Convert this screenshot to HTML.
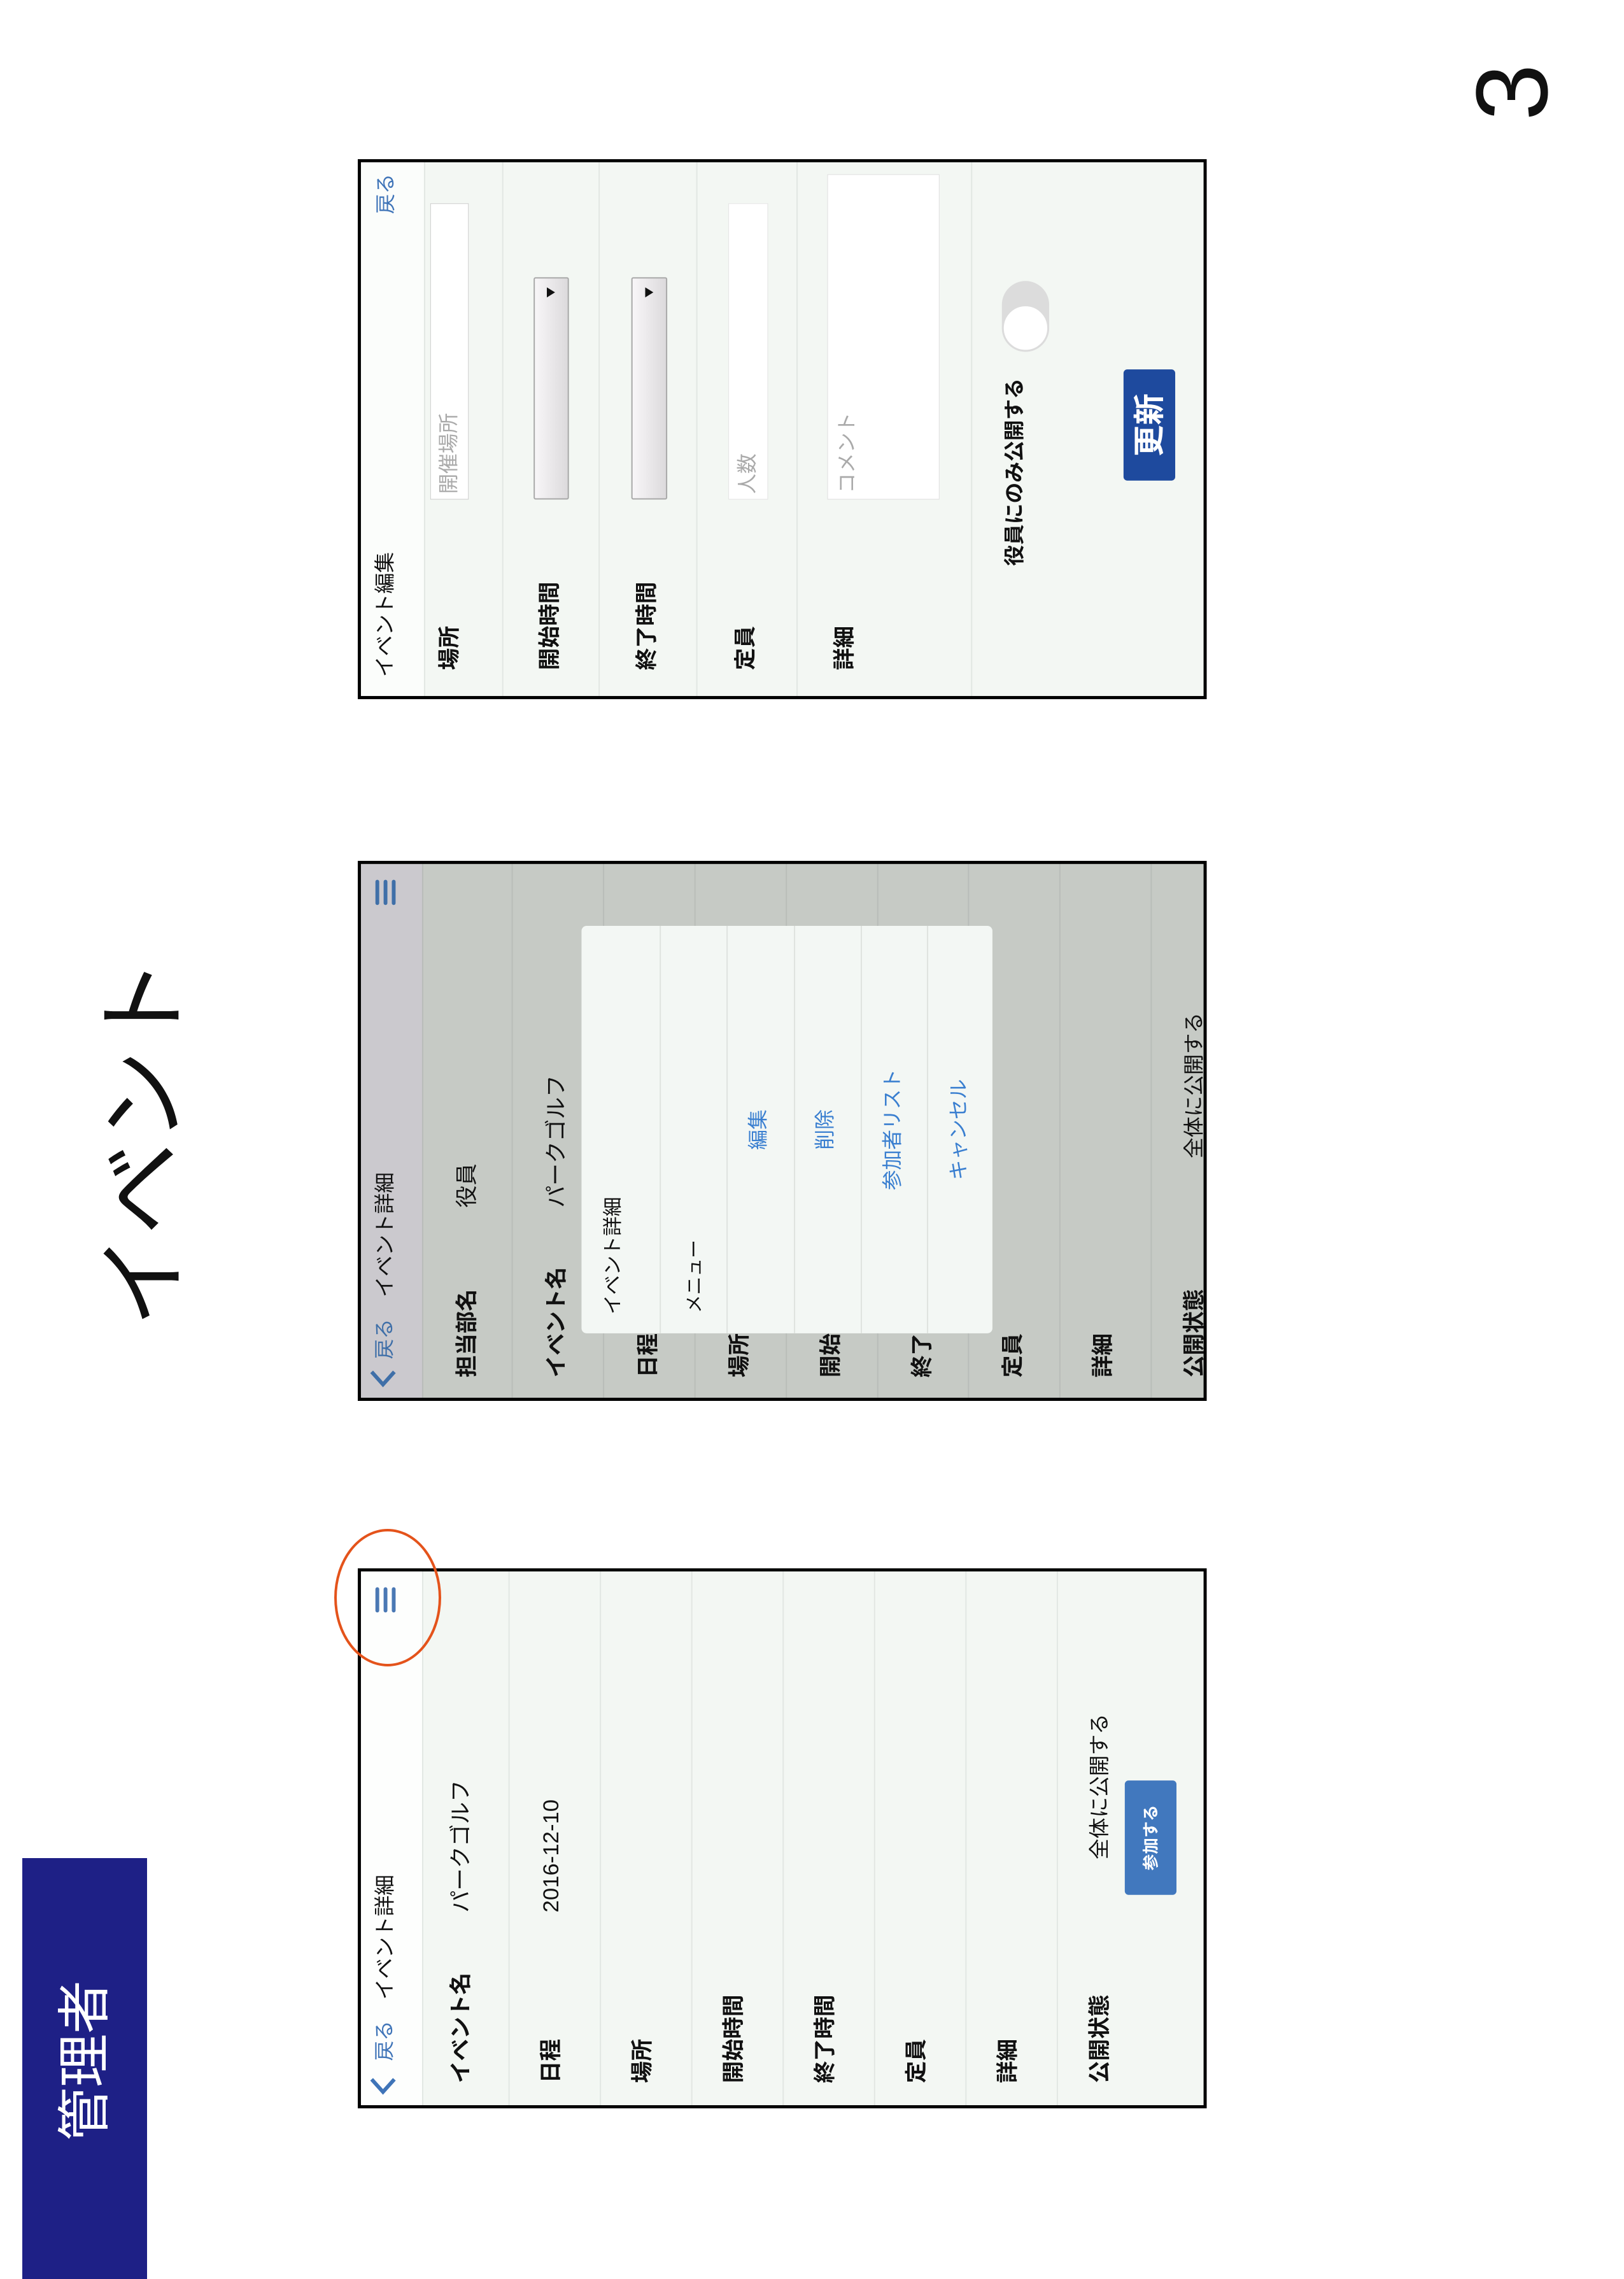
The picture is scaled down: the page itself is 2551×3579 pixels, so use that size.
<!DOCTYPE html>
<html><head><meta charset="utf-8">
<style>
*{margin:0;padding:0;box-sizing:border-box}
body{width:2551px;height:3579px;background:#fff;position:relative;overflow:hidden;font-family:"Liberation Sans","Noto Sans CJK JP",sans-serif;color:#111}
.abs{position:absolute}
.rot{position:absolute;transform:rotate(-90deg);text-align:center;white-space:nowrap}
.ph{position:absolute;left:562px;width:855px;height:1347px;transform-origin:0 0;transform:translate(0,848px) rotate(-90deg) scale(0.992,0.99);overflow:hidden;background:#f3f7f3}
.ph .frame{position:absolute;left:0;top:0;width:855px;height:1347px;border:5px solid #000;z-index:10}
.t{position:absolute;white-space:nowrap;line-height:1}
.lb{font-weight:bold;font-size:35px}
.v{font-size:35px}
.sep{position:absolute;left:0;width:855px;height:2px;background:#e2e7e3}
.blue{color:#3f74b8}
.ham{position:absolute;left:785px;width:40px;height:6px;border-radius:3px;background:#4a78b4}
</style></head><body>

<div class="rot" style="left:2295px;top:65px;width:160px;height:160px;font-size:160px;line-height:160px">3</div>
<div class="rot" style="left:-74px;top:1719px;width:600px;height:150px;font-size:145px;line-height:150px">イベント</div>
<div class="abs" style="left:35px;top:2918px;width:196px;height:661px;background:#1e2086"></div>
<div class="rot" style="left:-17px;top:3191px;width:300px;height:90px;font-size:84px;line-height:90px;color:#fff">管理者</div>
<div class="abs" style="left:525px;top:2401px;width:168px;height:216px;border:4px solid #e4531b;border-radius:50%;z-index:20"></div>

<!-- ===== Screen 1 ===== -->
<div class="ph" style="top:2463px">
  <div class="abs" style="left:0;top:0;width:855px;height:102px;background:#fdfefd"></div>
  <svg class="abs" style="left:16px;top:16px" width="40" height="50"><polyline points="30,6 10,24 30,42" fill="none" stroke="#3f74b8" stroke-width="6"/></svg>
  <div class="t blue" style="left:75px;top:26px;font-size:32px">戻る</div>
  <div class="t" style="left:172px;top:26px;font-size:33px">イベント詳細</div>
  <div class="ham" style="top:28px"></div><div class="ham" style="top:41px"></div><div class="ham" style="top:54px"></div>
  <div class="sep" style="top:102px"></div><div class="sep" style="top:239px"></div><div class="sep" style="top:384px"></div><div class="sep" style="top:529px"></div><div class="sep" style="top:674px"></div><div class="sep" style="top:819px"></div><div class="sep" style="top:964px"></div><div class="sep" style="top:1109px"></div>
  <div class="t lb" style="left:40px;top:146px">イベント名</div><div class="t v" style="left:310px;top:146px">パークゴルフ</div>
  <div class="t lb" style="left:40px;top:289px">日程</div><div class="t v" style="left:310px;top:289px">2016-12-10</div>
  <div class="t lb" style="left:40px;top:434px">場所</div>
  <div class="t lb" style="left:40px;top:579px">開始時間</div>
  <div class="t lb" style="left:40px;top:724px">終了時間</div>
  <div class="t lb" style="left:40px;top:869px">定員</div>
  <div class="t lb" style="left:40px;top:1014px">詳細</div>
  <div class="t lb" style="left:40px;top:1160px">公開状態</div>
  <div class="t v" style="left:394px;top:1160px;font-size:33px">全体に公開する</div>
  <div class="abs" style="left:338px;top:1217px;width:181px;height:82px;background:#4178be;border-radius:6px;color:#fff;font-weight:bold;font-size:26px;line-height:82px;text-align:center">参加する</div>
  <div class="frame"></div>
</div>

<!-- ===== Screen 2 ===== -->
<div class="ph" style="top:1352px;background:#c6cac5">
  <div class="abs" style="left:0;top:0;width:855px;height:102px;background:#cbc9ce"></div>
  <svg class="abs" style="left:16px;top:16px" width="40" height="50"><polyline points="30,6 10,24 30,42" fill="none" stroke="#3f6fa8" stroke-width="6"/></svg>
  <div class="t" style="left:66px;top:26px;font-size:32px;color:#3f6fa8">戻る</div>
  <div class="t" style="left:164px;top:26px;font-size:33px">イベント詳細</div>
  <div class="ham" style="top:28px;background:#3f6fa8"></div><div class="ham" style="top:41px;background:#3f6fa8"></div><div class="ham" style="top:54px;background:#3f6fa8"></div>
  <div class="sep" style="top:102px;background:#b9bdb9"></div><div class="sep" style="top:244px;background:#b9bdb9"></div><div class="sep" style="top:389px;background:#b9bdb9"></div><div class="sep" style="top:534px;background:#b9bdb9"></div><div class="sep" style="top:679px;background:#b9bdb9"></div><div class="sep" style="top:824px;background:#b9bdb9"></div><div class="sep" style="top:968px;background:#b9bdb9"></div><div class="sep" style="top:1113px;background:#b9bdb9"></div><div class="sep" style="top:1258px;background:#b9bdb9"></div>
  <div class="t lb" style="left:37px;top:156px">担当部名</div><div class="t v" style="left:306px;top:156px">役員</div>
  <div class="t lb" style="left:37px;top:298px">イベント名</div><div class="t v" style="left:306px;top:298px">パークゴルフ</div>
  <div class="t lb" style="left:37px;top:443px">日程</div>
  <div class="t lb" style="left:37px;top:588px">場所</div>
  <div class="t lb" style="left:37px;top:733px">開始時間</div>
  <div class="t lb" style="left:37px;top:878px">終了時間</div>
  <div class="t lb" style="left:37px;top:1022px">定員</div>
  <div class="t lb" style="left:37px;top:1165px">詳細</div>
  <div class="t lb" style="left:37px;top:1310px">公開状態</div>
  <div class="t v" style="left:384px;top:1310px;font-size:33px">全体に公開する</div>
  <div class="abs" style="left:107px;top:355px;width:645px;height:652px;background:#f3f7f4;border-radius:8px;overflow:hidden">
    <div class="sep" style="top:124px;background:#dfe3df"></div><div class="sep" style="top:230px;background:#dfe3df"></div><div class="sep" style="top:337px;background:#dfe3df"></div><div class="sep" style="top:443px;background:#dfe3df"></div><div class="sep" style="top:548px;background:#dfe3df"></div>
    <div class="t" style="left:30px;top:34px;font-size:31px">イベント詳細</div>
    <div class="t" style="left:32px;top:166px;font-size:29px">メニュー</div>
    <div class="t" style="left:0;width:645px;text-align:center;top:264px;font-size:32px;color:#3a7fd0">編集</div>
    <div class="t" style="left:0;width:645px;text-align:center;top:370px;font-size:32px;color:#3a7fd0">削除</div>
    <div class="t" style="left:0;width:645px;text-align:center;top:477px;font-size:32px;color:#3a7fd0">参加者リスト</div>
    <div class="t" style="left:0;width:645px;text-align:center;top:582px;font-size:32px;color:#3a7fd0">キャンセル</div>
  </div>
  <div class="frame"></div>
</div>

<!-- ===== Screen 3 ===== -->
<div class="ph" style="top:250px">
  <div class="abs" style="left:0;top:0;width:855px;height:105px;background:#fbfdfb"></div>
  <div class="t" style="left:35px;top:26px;font-size:33px">イベント編集</div>
  <div class="t blue" style="left:768px;top:28px;font-size:32px">戻る</div>
  <div class="sep" style="top:105px"></div><div class="sep" style="top:229px"></div><div class="sep" style="top:382px"></div><div class="sep" style="top:537px"></div><div class="sep" style="top:696px"></div><div class="sep" style="top:973px"></div>
  <div class="t lb" style="left:46px;top:128px">場所</div>
  <div class="t lb" style="left:46px;top:287px">開始時間</div>
  <div class="t lb" style="left:46px;top:441px">終了時間</div>
  <div class="t lb" style="left:46px;top:598px">定員</div>
  <div class="t lb" style="left:46px;top:755px">詳細</div>
  <div class="abs" style="left:316px;top:115px;width:469px;height:61px;background:#fff;border:1px solid #ccc"></div>
  <div class="t" style="left:325px;top:128px;font-size:32px;color:#aaa">開催場所</div>
  <div class="abs" style="left:316px;top:279px;width:352px;height:56px;background:linear-gradient(#f8f6f8,#dcdadc);border:2px solid #a8a8a8;border-radius:3px"></div>
  <svg class="abs" style="left:636px;top:300px" width="16" height="14"><polygon points="0,0 16,0 8,13" fill="#111"/></svg>
  <div class="abs" style="left:316px;top:434px;width:352px;height:57px;background:linear-gradient(#f8f6f8,#dcdadc);border:2px solid #a8a8a8;border-radius:3px"></div>
  <svg class="abs" style="left:636px;top:456px" width="16" height="14"><polygon points="0,0 16,0 8,13" fill="#111"/></svg>
  <div class="abs" style="left:316px;top:588px;width:469px;height:63px;background:#fff;border:1px solid #e3e3e3"></div>
  <div class="t" style="left:325px;top:602px;font-size:32px;color:#aaa">人数</div>
  <div class="abs" style="left:316px;top:745px;width:515px;height:178px;background:#fff;border:1px solid #ddd"></div>
  <div class="t" style="left:326px;top:760px;font-size:32px;color:#aaa">コメント</div>
  <div class="t" style="left:211px;top:1025px;font-size:33px;font-weight:bold">役員にのみ公開する</div>
  <div class="abs" style="left:550px;top:1022px;width:112px;height:75px;background:#dcdcdc;border-radius:38px"></div>
  <div class="abs" style="left:550px;top:1022px;width:75px;height:75px;background:#fff;border:3px solid #dcdcdc;border-radius:50%"></div>
  <div class="abs" style="left:346px;top:1215px;width:176px;height:82px;background:#1e4a9e;border-radius:6px;color:#fff;font-weight:bold;font-size:50px;line-height:82px;text-align:center">更新</div>
  <div class="frame"></div>
</div>

</body></html>
